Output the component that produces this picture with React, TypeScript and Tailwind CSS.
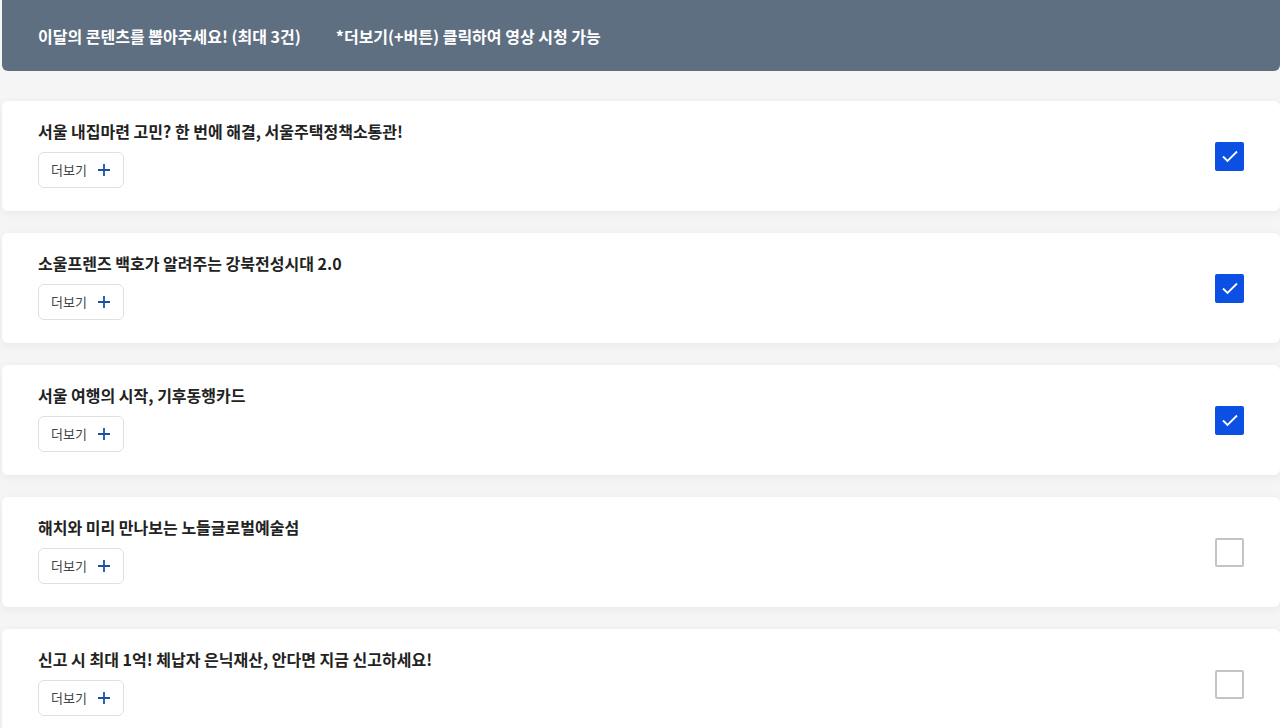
import { useState } from 'react'

const ITEMS = [
  '서울 내집마련 고민? 한 번에 해결, 서울주택정책소통관!',
  '소울프렌즈 백호가 알려주는 강북전성시대 2.0',
  '서울 여행의 시작, 기후동행카드',
  '해치와 미리 만나보는 노들글로벌예술섬',
  '신고 시 최대 1억! 체납자 은닉재산, 안다면 지금 신고하세요!',
]

export default function App() {
  // 선택된 콘텐츠 (최대 3건)
  const [checked, setChecked] = useState<boolean[]>([true, true, true, false, false])

  const toggle = (i: number) => {
    setChecked((prev) => {
      const count = prev.filter(Boolean).length
      if (!prev[i] && count >= 3) return prev
      return prev.map((v, idx) => (idx === i ? !v : v))
    })
  }

  return (
    <div
      className="min-h-screen bg-[#f5f5f5] pl-[2px] pb-8"
      style={{ fontFamily: '"Noto Sans CJK KR", "Noto Sans", sans-serif' }}
    >
      <div className="h-[71px] bg-[#5f6f82] rounded-b-md flex items-center gap-[35px] pl-9 text-white text-[16px] font-bold">
        <span>이달의 콘텐츠를 뽑아주세요! (최대 3건)</span>
        <span>*더보기(+버튼) 클릭하여 영상 시청 가능</span>
      </div>

      <div className="mt-[30px] flex flex-col gap-[22px]">
        {ITEMS.map((title, i) => (
          <div
            key={i}
            className="bg-white rounded-md shadow-[0_2px_10px_rgba(0,0,0,0.06)] h-[110px] flex items-center justify-between pl-9 pr-9"
          >
            <div className="flex flex-col self-start pt-[18px]">
              <div className="text-[16px] font-semibold text-[#222] leading-6">{title}</div>
              <button className="mt-[9px] w-[86px] h-9 border border-[#e0e0e0] rounded-md flex items-center justify-center gap-[10px] bg-white">
                <span className="text-[13px] text-[#444]">더보기</span>
                <svg width="14" height="14" viewBox="0 0 14 14" fill="none">
                  <path d="M7 1v12M1 7h12" stroke="#1f4fa8" strokeWidth="1.8" />
                </svg>
              </button>
            </div>
            <button
              onClick={() => toggle(i)}
              className={
                checked[i]
                  ? 'w-[29px] h-[29px] rounded-[2px] bg-[#0b4fe3] flex items-center justify-center'
                  : 'w-[29px] h-[29px] rounded-[2px] border-2 border-[#c4c4c4] bg-white'
              }
            >
              {checked[i] && (
                <svg width="18" height="14" viewBox="0 0 18 14" fill="none">
                  <path d="M2 7.5l4.5 4.5L16 2.5" stroke="white" strokeWidth="1.8" />
                </svg>
              )}
            </button>
          </div>
        ))}
      </div>
    </div>
  )
}
